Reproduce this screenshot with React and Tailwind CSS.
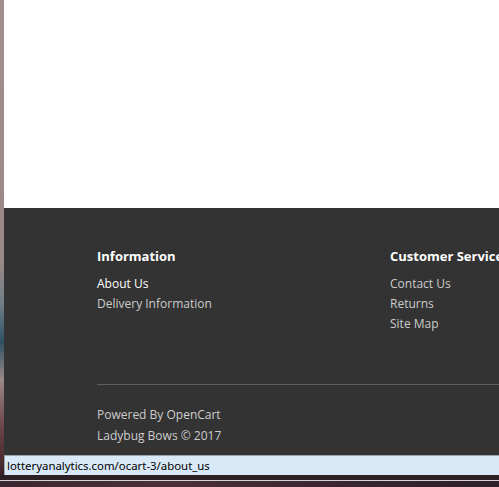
export default function App() {
  const font = { fontFamily: '"Open Sans", "Noto Sans", sans-serif' };
  return (
    <div className="w-[499px] h-[487px] overflow-hidden flex flex-col bg-[#2a1e26]">
      <div className="flex h-[475px]">
        <div className="w-[4px] shrink-0 h-full bg-[linear-gradient(180deg,#a48e8c_0%,#9a8886_55%,#6f7d86_64%,#2f5266_72%,#9b8787_80%,#6a4448_90%,#3a2228_100%)]" />
        <div className="flex-1 min-w-0 flex flex-col overflow-hidden">
          <div className="h-[208px] bg-white" />
          <div
            className="h-[247px] bg-[#333333] text-[12px] text-[#cccccc] pl-[93px] pt-[38px]"
            style={font}
          >
            <div className="flex">
              <div className="w-[293px] shrink-0">
                <h5 className="font-bold text-white text-[13px] leading-[20px]">Information</h5>
                <ul className="mt-[8px] text-[12px] leading-[20px]">
                  <li className="text-white">About Us</li>
                  <li>Delivery Information</li>
                </ul>
              </div>
              <div className="w-[293px] shrink-0">
                <h5 className="font-bold text-white text-[13px] leading-[20px] whitespace-nowrap">Customer Service</h5>
                <ul className="mt-[8px] text-[12px] leading-[20px]">
                  <li>Contact Us</li>
                  <li>Returns</li>
                  <li>Site Map</li>
                </ul>
              </div>
            </div>
            <div className="mt-[50px] h-px bg-[#5e5e5e]" />
            <div className="mt-[19px] leading-[21px]">
              <p>Powered By <span className="text-[#d0d0d0]">OpenCart</span></p>
              <p>Ladybug Bows © 2017</p>
            </div>
          </div>
          <div
            className="h-[20px] bg-[#d9e9f8] border-t border-l border-[#9aa4ae] text-[11.4px] leading-[19px] pl-[2px] text-black whitespace-nowrap"
            style={{ fontFamily: '"Noto Sans", "Open Sans", sans-serif' }}
          >
            lotteryanalytics.com/ocart-3/about_us
          </div>
        </div>
      </div>
      <div className="h-[12px] flex flex-col">
        <div className="h-[5px] bg-[#2b2026]" />
        <div className="h-px bg-[#d8d4d6]" />
        <div className="flex-1 bg-[linear-gradient(90deg,#3a2630,#4a3038,#3a2530,#2e1f28)]" />
      </div>
    </div>
  );
}
